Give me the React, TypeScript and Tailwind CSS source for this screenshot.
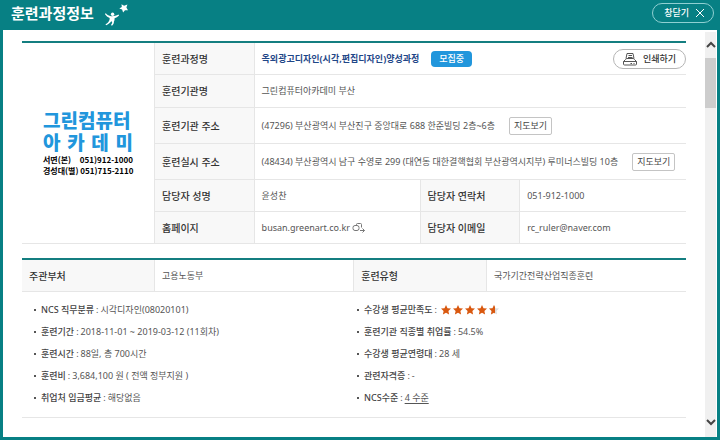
import type { ReactNode } from "react";

const StarManIcon = () => (
  <svg className="w-6 h-6 fill-white" viewBox="0 0 24 24" aria-hidden="true">
    <path d="M17.500.3l2.600 1.500 3.300-1.300-1 3.100 1.600 2.700-3-.1-1.900 2.300-1-2.900-2.800-1.200 2.500-1.500z" />
    <circle cx="8.600" cy="10.200" r="1.700" />
    <path d="M1.800 9.300c1.500 1.700 3.200 2.700 5.200 2.900 2.600.2 5.100-.4 7.500-1.700l.6 1c-1.500 1.300-3 2.200-4.500 2.700.1 1.300-.2 2.500-.7 3.600.2 1.200-.6 2.600-1.900 3.900l-1-.6c.8-1.200 1.200-2.200 1.200-3.100l-.9-.7c-1.300 1.700-3 3-5.200 3.900l-.6-1c2-1.100 3.300-2.500 4-4.300l.2-1.900C3.700 13.200 2.100 11.900.9 10z" />
  </svg>
);

const PrinterIcon = () => (
  <svg
    className="w-3.5 h-3.5 stroke-[#555] fill-none"
    viewBox="0 0 14 14"
    aria-hidden="true"
  >
    <path d="M3 6.500l1-5h6l1 5M5.500 3.500h3.500M5 5.500h4.500" />
    <path d="M2.500 7.500q.5-1 1.500-1h6q1 0 1.500 1l2 2v2.500q0 1-1 1h-11q-1 0-1-1V9.500z" />
    <path d="M.5 9.500h13M7.500 11.500h1.500M10.500 11.500h1" />
  </svg>
);

const LinkIcon = () => (
  <svg
    className="w-3.5 h-3 stroke-[#777] fill-none"
    viewBox="0 0 14 12"
    aria-hidden="true"
  >
    <rect x="1" y="3.500" width="6" height="5" rx="2" />
    <path d="M4.500 3.500V2.500q0-1 1-1h3q1 0 1 1v3" />
    <path d="M8 8.500h4.500M10.500 6.500l2 2-2 2" />
  </svg>
);

const STAR = "M5 0l1.500 3.200 3.500.4-2.600 2.400.7 3.500L5 7.800 1.900 9.500l.7-3.500L0 3.600l3.500-.4z";

const StarIcon = ({ half = false }: { half?: boolean }) => (
  <svg className="w-2.5 h-2.5" viewBox="0 0 10 10" aria-hidden="true">
    {half ? (
      <>
        <path d={STAR} className="fill-[#ddd]" />
        <path
          d="M6 2v6.400L5 7.800 1.900 9.500l.7-3.500L0 3.600l3.500-.4L5 0z"
          className="fill-[#d9580f]"
        />
      </>
    ) : (
      <path d={STAR} className="fill-[#d9580f]" />
    )}
  </svg>
);

const Chevron = ({ down = false }: { down?: boolean }) => (
  <svg
    className="w-2.5 h-2.5 stroke-[#444] fill-none stroke-2"
    viewBox="0 0 10 10"
    aria-hidden="true"
  >
    <path d={down ? "M1 3l4 4 4-4" : "M1 7l4-4 4 4"} />
  </svg>
);

const Th = ({ children }: { children: ReactNode }) => (
  <th
    scope="row"
    className="border-b border-l border-[#e6e6e6] bg-[#f8f8f8] pl-[7px] text-left text-[10px] font-medium text-[#333]"
  >
    {children}
  </th>
);

const Td = ({ children, span = 1 }: { children: ReactNode; span?: number }) => (
  <td colSpan={span} className="border-b border-l border-[#e6e6e6] pl-[7px]">
    {children}
  </td>
);

const MapButton = () => (
  <button
    type="button"
    className="h-[18px] rounded-xs border border-[#c4c4c4] px-1 text-[#444]"
  >
    지도보기
  </button>
);

const Item = ({ label, children }: { label: string; children: ReactNode }) => (
  <li className="flex items-center h-[22px]">
    <span className="w-0.5 h-0.5 mr-[5px] bg-[#555]" />
    <span className="font-medium text-[#444]">{label}</span>
    <span className="mx-0.5">:</span>
    {children}
  </li>
);

const Logo = () => (
  <div className="mx-auto w-[90px] text-black">
    <div className="text-[19px] leading-[22px] font-black text-[#2196dc]">
      <p className="whitespace-nowrap">그린컴퓨터</p>
      <p className="[text-align-last:justify]">아 카 데 미</p>
    </div>
    <div className="text-[8px] leading-[11px] font-bold whitespace-nowrap font-['Noto_Sans_CJK_KR',sans-serif]">
      <p className="[text-align-last:justify]">서면(본) 051)912-1000</p>
      <p className="[text-align-last:justify]">경성대(별) 051)715-2110</p>
    </div>
  </div>
);

const CourseTable = () => (
  <table className="w-full table-fixed border-separate border-spacing-0 border-t-2 border-[#147e80]">
    <colgroup>
      <col className="w-[132px]" />
      <col className="w-[15%]" />
      <col className="w-[25%]" />
      <col className="w-[15%]" />
      <col />
    </colgroup>
    <tbody>
      <tr className="h-8">
        <td rowSpan={6} className="border-b border-[#e6e6e6]">
          <Logo />
        </td>
        <Th>훈련과정명</Th>
        <Td span={3}>
          <div className="flex items-center">
            <strong className="font-bold text-[#1f4788]">
              옥외광고디자인(시각,편집디자인)양성과정
            </strong>
            <span className="ml-3 h-4 leading-4 rounded-sm bg-[#2196dc] px-2 font-medium text-white">
              모집중
            </span>
            <button
              type="button"
              className="ml-auto flex items-center gap-1.5 h-5 rounded-full border border-[#b5b5b5] px-[9px] font-medium text-[#333]"
            >
              <PrinterIcon />
              인쇄하기
            </button>
          </div>
        </Td>
      </tr>
      <tr className="h-[33px]">
        <Th>훈련기관명</Th>
        <Td span={3}>그린컴퓨터아카데미 부산</Td>
      </tr>
      <tr className="h-9">
        <Th>훈련기관 주소</Th>
        <Td span={3}>
          <div className="flex items-center gap-3.5">
            (47296) 부산광역시 부산진구 중앙대로 688 한준빌딩 2층~6층
            <MapButton />
          </div>
        </Td>
      </tr>
      <tr className="h-9">
        <Th>훈련실시 주소</Th>
        <Td span={3}>
          <div className="flex items-center gap-3.5 whitespace-nowrap">
            (48434) 부산광역시 남구 수영로 299 (대연동 대한결핵협회
            부산광역시지부) 루미너스빌딩 10층
            <MapButton />
          </div>
        </Td>
      </tr>
      <tr className="h-8">
        <Th>담당자 성명</Th>
        <Td>윤성찬</Td>
        <Th>담당자 연락처</Th>
        <Td>051-912-1000</Td>
      </tr>
      <tr className="h-8">
        <Th>홈페이지</Th>
        <Td>
          <a href="#homepage" className="flex items-center gap-0.5">
            busan.greenart.co.kr
            <LinkIcon />
          </a>
        </Td>
        <Th>담당자 이메일</Th>
        <Td>rc_ruler@naver.com</Td>
      </tr>
    </tbody>
  </table>
);

const TrainingInfo = () => (
  <section className="mt-3.5">
    <table className="w-full table-fixed border-separate border-spacing-0 border-t-2 border-[#147e80] [&_th:first-child]:border-l-0">
      <colgroup>
        <col className="w-[132px]" />
        <col className="w-[30%]" />
        <col className="w-[20%]" />
        <col />
      </colgroup>
      <tbody>
        <tr className="h-8">
          <Th>주관부처</Th>
          <Td>고용노동부</Td>
          <Th>훈련유형</Th>
          <Td>국가기간전략산업직종훈련</Td>
        </tr>
      </tbody>
    </table>
    <div className="grid grid-cols-2 border-b border-[#e6e6e6] pt-[7px] pb-2">
      <ul className="pl-3">
        <Item label="NCS 직무분류">시각디자인(08020101)</Item>
        <Item label="훈련기간">2018-11-01 ~ 2019-03-12 (11회차)</Item>
        <Item label="훈련시간">88일, 총 700시간</Item>
        <Item label="훈련비">3,684,100 원 ( 전액 정부지원 )</Item>
        <Item label="취업처 임금평균">해당없음</Item>
      </ul>
      <ul className="pl-[3px]">
        <Item label="수강생 평균만족도">
          <span className="flex gap-0.5 ml-0.5" role="img" aria-label="4.5">
            <StarIcon />
            <StarIcon />
            <StarIcon />
            <StarIcon />
            <StarIcon half />
          </span>
        </Item>
        <Item label="훈련기관 직종별 취업률">54.5%</Item>
        <Item label="수강생 평균연령대">28 세</Item>
        <Item label="관련자격증">-</Item>
        <Item label="NCS수준">
          <a href="#ncs" className="underline underline-offset-2">
            4 수준
          </a>
        </Item>
      </ul>
    </div>
  </section>
);

const App = () => {
  return (
    <div className="flex flex-col min-h-screen bg-[#078084] text-[9px] leading-4 text-[#555] font-['Noto_Sans','Noto_Sans_CJK_KR',sans-serif]">
      <header className="flex items-center h-[30px] pl-[11px] pr-1.5 pb-1 text-white">
        <h1 className="text-[15px] font-bold">훈련과정정보</h1>
        <span className="ml-2.5 mt-1.5">
          <StarManIcon />
        </span>
        <button
          type="button"
          className="ml-auto flex items-center gap-1.5 h-5 rounded-full border border-[#8fd0d2] pl-[11px] pr-2 font-medium"
        >
          창닫기
          <svg className="w-2.5 h-2.5 stroke-white" viewBox="0 0 10 10" aria-hidden="true">
            <path d="M1 1l8 8M9 1l-8 8" />
          </svg>
        </button>
      </header>
      <div className="flex flex-1 mx-[3px] mb-[3px] bg-white">
        <main className="flex-1 min-w-0 px-[19px] pt-[11px]">
          <CourseTable />
          <TrainingInfo />
        </main>
        <div className="flex flex-col w-[11px] mt-0.5 mr-px bg-[#f0f0f0]">
          <button type="button" aria-label="위로" className="flex items-center justify-center h-[26px]">
            <Chevron />
          </button>
          <div className="h-[50px] bg-[#cdcdcd]" />
          <button type="button" aria-label="아래로" className="mt-auto flex items-center justify-center h-[30px]">
            <Chevron down />
          </button>
        </div>
      </div>
    </div>
  );
};

export default App;
